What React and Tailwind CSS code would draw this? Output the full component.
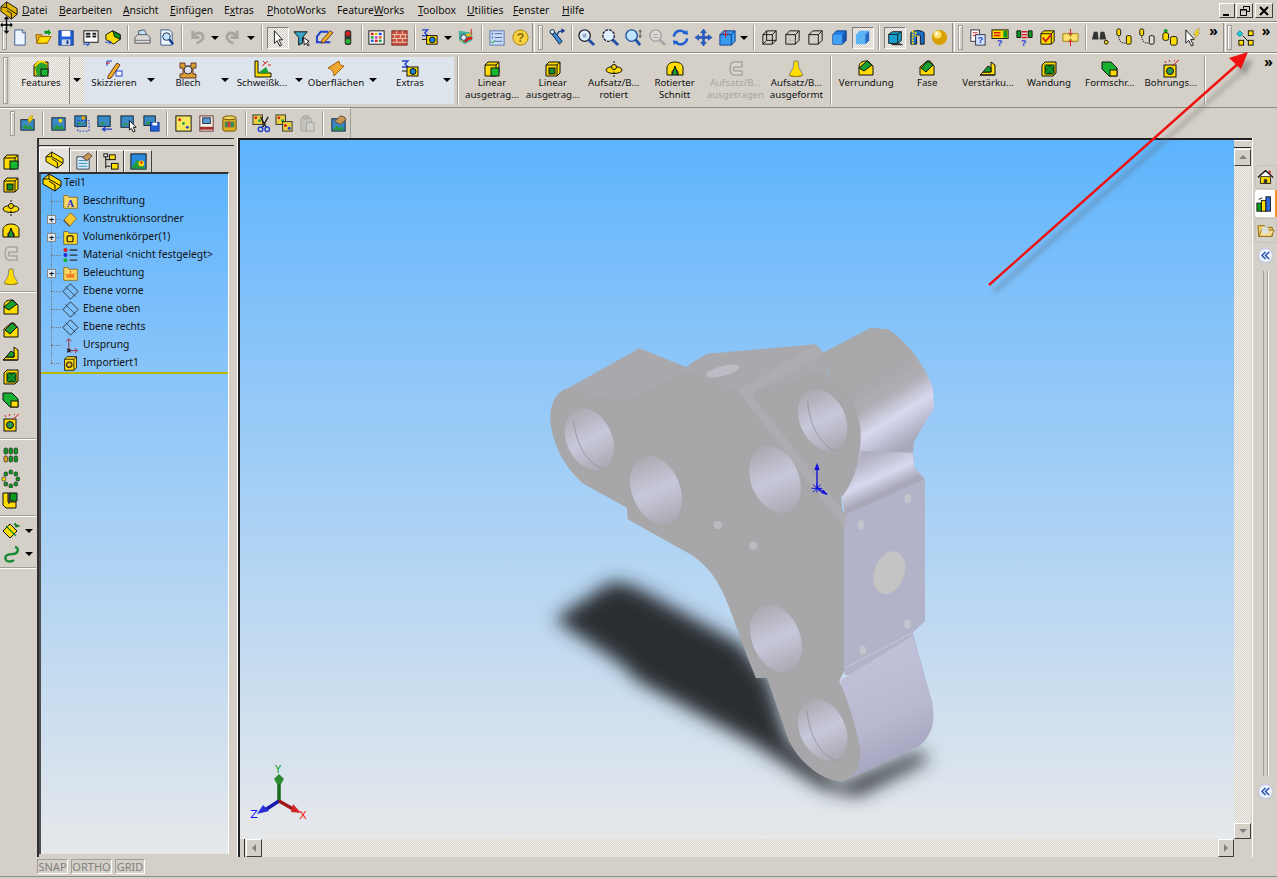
import React from "react";

const Y = "#ffdc00", G = "#0b9a1e", K = "#111", B = "#1f5fd8", R = "#d81c1c";
const S = { stroke: K, strokeWidth: 1 };
const Block = ({ f = Y }) => <path d="M3 6l3-3h11v11l-3 3H3z" fill={f} {...S} />;
const Inner = () => <path d="M3 6h11v11M14 6l3-3" fill="none" stroke={K} />;
const Dn = () => <span className="block w-0 h-0 border-x-[4px] border-t-[4px] border-x-transparent border-t-black" />;

const icons = {
  app: <g><path d="M1 6l6-5 11 7v6l-6 5L1 11z" fill="#e0b400" {...S} /><path d="M7 1v6l11 7M7 7L1 6" fill="none" stroke={K} /><path d="M7 10l5 3v6" fill="none" stroke={K} /></g>,
  new: <g><path d="M5 2h8l3 3v13H5z" fill="#eef5ff" stroke="#3b5f8f" /><path d="M13 2v3h3" fill="#c8dcf4" stroke="#3b5f8f" /></g>,
  open: <g><path d="M2 7h6l1 2h5v7H3z" fill="#e8a820" stroke="#9a6a00" /><path d="M3 16l3-7h12l-4 7z" fill={Y} stroke="#9a6a00" /><path d="M11 3l4 0 0-2 3 4-3 3 0-2h-4z" fill={G} /></g>,
  save: <g><rect x="2" y="3" width="15" height="15" fill="#1f5fd8" stroke="#123a8a" /><rect x="5" y="3" width="9" height="6" fill="#fff" /><rect x="5" y="12" width="9" height="6" fill="#cfd8e8" /><rect x="10" y="13" width="2" height="4" fill="#123a8a" /></g>,
  props: <g><rect x="3" y="3" width="15" height="12" fill="#fff" {...S} /><path d="M5 6h5M5 9h5M12 6h4M12 9h4" stroke="#222" strokeWidth="2" /><path d="M2 17h6M6 15l3 2-3 2" stroke="#1f4fd0" fill="none" /></g>,
  part: <g><path d="M2 7l7-4 8 4v5l-7 5-8-5z" fill={Y} {...S} /><path d="M9 3l8 4v5l-6-3-1-4z" fill={G} {...S} /><path d="M1 15h6M5 13l3 2-3 2" stroke="#1f4fd0" fill="none" /></g>,
  print: <g><path d="M6 3l6-1 3 6H6z" fill="#bfe0f8" stroke="#456" /><path d="M2 10l3-3h10l3 3v6H2z" fill="#d8d8d8" stroke="#555" /><path d="M2 13h16" stroke="#777" /></g>,
  preview: <g><path d="M4 2h9l3 3v13H4z" fill="#eef5ff" stroke="#3b5f8f" /><circle cx="10" cy="9" r="4" fill="#bfe4ff" stroke="#234" /><path d="M13 12l4 5" stroke="#123a8a" strokeWidth="2.5" /></g>,
  undo: <g><path d="M5 3v7h7M6 9c2-5 9-5 10 0 0 3-3 6-7 7" fill="none" stroke="#a8a6a0" strokeWidth="3" /></g>,
  redo: <g><path d="M15 3v7H8M14 9c-2-5-9-5-10 0 0 3 3 6 7 7" fill="none" stroke="#a8a6a0" strokeWidth="3" /></g>,
  select: <path d="M6 2v14l3-3 3 6 2-1-3-6h4z" fill="#fff" {...S} />,
  filter: <g><path d="M2 4h14l-5 6v6l-4 2v-8z" fill="#37a6c8" {...S} /><path d="M12 10l1 8 2-2 2 3 1-1-2-3 2-1z" fill="#fff" {...S} /></g>,
  sketch: <g><path d="M14 4H6L2 9v6h14" fill="none" stroke="#1f3fd0" strokeWidth="2" /><path d="M7 13l9-10 3 2-9 10-3 1z" fill="#f0b020" stroke="#633" /></g>,
  light: <g><rect x="7" y="2" width="7" height="16" rx="3" fill="#333" /><circle cx="10.5" cy="6" r="2.5" fill="#d81c1c" /><circle cx="10.5" cy="14" r="2.5" fill="#22c030" /></g>,
  grid: <g><rect x="2" y="3" width="16" height="14" fill="#fff" {...S} /><g>{[[R,"#e0c000","#2040e0"],["#20a040","#c040c0","#e06020"],["#2060e0",R,"#20a040"]].map((r,i)=>r.map((c,j)=><rect key={i+"-"+j} x={4+j*4.2} y={5+i*3.6} width="3" height="2.6" fill={c} />))}</g></g>,
  brick: <g><rect x="2" y="3" width="16" height="15" fill="#c8523e" stroke="#7a2a20" /><path d="M2 7h16M2 11h16M2 15h16M7 3v4M13 3v4M5 7v4M11 7v4M16 7v4M7 11v4M13 11v4" stroke="#f0c8b8" /></g>,
  tape: <g><path d="M2 2h6l-3 3 3 3H2" fill="none" stroke="#1f3fd0" strokeWidth="1.4" /><path d="M2 12h16" stroke={K} /><rect x="7" y="8" width="11" height="9" fill={Y} {...S} /><circle cx="13" cy="12.5" r="3" fill="#1f7fd0" {...S} /></g>,
  rainbow: <g><path d="M2 3l14 2v8l-8 4-6-4z" fill="#40b0a0" /><path d="M5 14c1-6 6-7 10-7" stroke="#e8c020" strokeWidth="3" fill="none" /><path d="M9 15c0-3 3-5 7-4" stroke={R} strokeWidth="3" fill="none" /><path d="M15 1v6" stroke={R} /><circle cx="7" cy="10" r="3" fill="#ddeeff" stroke="#234" /></g>,
  list: <g><rect x="3" y="3" width="15" height="15" fill="#c8dcf8" stroke="#5a7ab0" /><path d="M8 6h8M8 10h8M8 14h8" stroke="#4a6a9a" /><path d="M5 6h1M5 10h1" stroke="#2040a0" strokeWidth="2" /><path d="M4 14l2 2 2-3" stroke={G} fill="none" /></g>,
  help: <g><circle cx="10" cy="10" r="8" fill="#f8d040" stroke="#a88000" /><text x="10" y="15" textAnchor="middle" fontSize="13" fontWeight="700" fontFamily="Liberation Sans" fill="#8a6a10">?</text></g>,
  flash: <g><path d="M3 5l3-2 9 11-3 3z" fill="#3a8ad8" stroke="#123" /><circle cx="4.5" cy="4" r="2.4" fill="#cfe8ff" stroke="#123" /><path d="M10 7c0-3 2-4 6-4M14 1l3 2-3 2" stroke="#123a8a" fill="none" strokeWidth="1.4" /></g>,
  zoom: <g><circle cx="8" cy="8" r="6" fill="#dff0ff" stroke="#223" strokeWidth="1.4" /><path d="M12 12l6 6" stroke="#1f4fa0" strokeWidth="3" /><rect x="6" y="6" width="4" height="4" fill="#9ac" /></g>,
  zoomd: <g><circle cx="8" cy="8" r="6" fill="#dff0ff" stroke="#223" strokeWidth="1.4" strokeDasharray="3 1" /><path d="M12 12l6 6" stroke="#1f4fa0" strokeWidth="3" /></g>,
  zoomu: <g><circle cx="8" cy="8" r="6" fill="#bfe4ff" stroke="#1f4fa0" strokeWidth="1.4" /><path d="M12 12l5 6" stroke="#1f4fa0" strokeWidth="3" /><path d="M17 2v8M15.5 4L17 2l1.5 2M15.5 8l1.5 2 1.5-2" stroke="#555" fill="none" /></g>,
  zoomg: <g><circle cx="8" cy="8" r="6" fill="#dcdad4" stroke="#a0a0a0" strokeWidth="1.4" /><path d="M12 12l6 6" stroke="#a8a8a8" strokeWidth="3" /><path d="M5 7h6M5 10h6" stroke="#aaa" /></g>,
  rotate: <g><path d="M3 9a7 7 0 0 1 12-4" fill="none" stroke="#1f5fd0" strokeWidth="2.6" /><path d="M17 11a7 7 0 0 1-12 4" fill="none" stroke="#1f5fd0" strokeWidth="2.6" /><path d="M12 6l6 1-1-5zM8 14l-6-1 1 5z" fill="#1f5fd0" /></g>,
  pan: <path d="M10 1l3 4h-2v4h4V7l4 3-4 3v-2h-4v4h2l-3 4-3-4h2v-4H5v2l-4-3 4-3v2h4V5H7z" fill="#1f5fd0" stroke="#123a8a" strokeWidth=".5" />,
  views: <g><path d="M2 7l4-4h12v11l-4 4H2z" fill="#3a9cf0" stroke="#123a8a" /><path d="M2 7h12v11M14 7l4-4" fill="none" stroke="#123a8a" /><path d="M8 2v8M5 5l3 3 3-3" stroke={R} fill="none" /></g>,
  wire: <path d="M3 7l4-4h10v10l-4 4H3zM3 7h10v10M13 7l4-4M7 3v10h10M7 13l-4 4" fill="none" stroke={K} />,
  hid: <g><path d="M3 7l4-4h10v10l-4 4H3zM3 7h10v10M13 7l4-4" fill="none" stroke={K} /><path d="M7 3v10h10M7 13l-4 4" fill="none" stroke="#999" strokeDasharray="1 1" /></g>,
  sil: <path d="M3 7l4-4h10v10l-4 4H3zM3 7h10v10M13 7l4-4" fill="none" stroke={K} />,
  shade: <g><path d="M3 7l4-4h10v10l-4 4H3z" fill="#1f7fe8" stroke="#123a8a" /><path d="M3 7h10v10H3z" fill="#3fa0f4" /><path d="M13 7l4-4v10l-4 4z" fill="#1a55b0" /></g>,
  shadebig: <g><path d="M3 7l4-4h10v10l-4 4H3z" fill="#5ab4f4" /><path d="M13 7l4-4v10l-4 4z" fill="#2a6ac0" /></g>,
  shadow: <g><path d="M5 16l12 0 2 2H7z" fill="#333" /><path d="M3 6l4-3h10v10l-4 3H3z" fill="#1aa0d0" stroke={K} /><path d="M3 6h10v10M13 6l4-3" fill="none" stroke={K} /></g>,
  sect: <g><path d="M3 5c3-3 11-3 14 0v12h-4V8c-1-1-3-1-4 0v9H3z" fill="#1a70d0" stroke={K} /><path d="M5 3v14M8 4v5" stroke={Y} strokeDasharray="2 1" strokeWidth="2" /></g>,
  ball: <g><circle cx="10" cy="10" r="8" fill="#d8a000" /><circle cx="8" cy="7" r="4" fill="#ffe26a" /><circle cx="7" cy="6" r="1.5" fill="#fff" /></g>,
  refq: <g><rect x="3" y="2" width="9" height="12" fill="#fff" stroke="#334" /><path d="M5 5h5M5 8h5" stroke={R} /><rect x="8" y="7" width="10" height="11" fill="#cfe4ff" stroke="#334" /><text x="13" y="16" textAnchor="middle" fontSize="10" fontWeight="700" fontFamily="Liberation Sans" fill="#1f3fd0">?</text></g>,
  ybar: <g><rect x="1" y="2" width="17" height="9" fill={Y} {...S} /><path d="M3 5h7M3 8h7" stroke={R} strokeWidth="1.6" /><rect x="13" y="3" width="4" height="7" fill={G} /><text x="9" y="19" textAnchor="middle" fontSize="10" fontWeight="700" fontFamily="Liberation Sans" fill="#1f3fd0">?</text></g>,
  gbar: <g><path d="M2 3h4v7H2zM14 3h4v7h-4z" fill={G} {...S} /><path d="M7 4h6M7 7h6M7 10h6" stroke={R} strokeWidth="1.5" /><text x="9" y="19" textAnchor="middle" fontSize="10" fontWeight="700" fontFamily="Liberation Sans" fill="#1f3fd0">?</text></g>,
  check: <g><Block /><Inner /><path d="M5 10l3 4 6-7" stroke={R} strokeWidth="2" fill="none" /></g>,
  squeeze: <g><path d="M2 6h6l2 3 2-3h6v8h-6l-2-3-2 3H2z" fill="#ffe070" stroke="#a08000" /><path d="M10 1v6M8 5l2 2 2-2M10 19v-6M8 15l2-2 2 2" stroke={R} fill="none" /></g>,
  binoc: <g><path d="M3 4h4l1 8H1zM10 4h4l2 8H9z" fill="#333" /><circle cx="16" cy="15" r="2" fill={Y} stroke={K} /></g>,
  cyl1: <g><rect x="3" y="1" width="4" height="7" rx="1.5" fill={Y} {...S} /><path d="M5 9c0 5 3 7 7 7" stroke={K} fill="none" strokeDasharray="1.5 1" /><rect x="13" y="8" width="5" height="9" rx="1.5" fill={Y} {...S} /></g>,
  cyl2: <g><rect x="3" y="1" width="4" height="7" rx="1.5" fill={Y} {...S} /><path d="M5 9c0 5 3 7 7 7" stroke={K} fill="none" strokeDasharray="1.5 1" /><rect x="13" y="8" width="5" height="9" rx="1.5" fill="#ddd" {...S} /></g>,
  cyl3: <g><circle cx="6" cy="3" r="2" fill={G} /><rect x="3" y="5" width="6" height="8" rx="2" fill={Y} {...S} /><rect x="11" y="9" width="7" height="9" rx="2" fill={Y} {...S} /></g>,
  curbolt: <g><path d="M3 2v14l3-3 3 6 2-1-3-6h4z" fill="#fff" {...S} /><path d="M15 1l-4 6h3l-3 6 7-8h-3l3-4z" fill={Y} stroke="#888" strokeWidth=".5" /></g>,
  nodes: <g><path d="M4 3l-3 3 3 3 3-3z" fill="#18d8e8" stroke="#0a7a8a" /><rect x="13" y="3" width="5" height="5" fill={Y} {...S} /><rect x="3" y="13" width="5" height="5" fill={Y} {...S} /><rect x="13" y="13" width="5" height="5" fill={Y} {...S} /><path d="M7 8l6 6" stroke={K} /></g>,
  fe: <g><Block /><Inner /><rect x="9" y="9" width="8" height="8" fill="#18b830" stroke={K} /></g>,
  cut: <g><Block /><Inner /><rect x="6" y="9" width="6" height="6" fill="#1a8a2a" stroke={K} /></g>,
  revb: <g><ellipse cx="10" cy="11" rx="8" ry="3.5" fill={Y} {...S} /><path d="M10 2v16" stroke={K} strokeDasharray="2 1.5" /><circle cx="10" cy="8" r="2.5" fill={Y} stroke={K} /></g>,
  revc: <g><path d="M2 9c0-8 16-8 16 0v7h-5v-3c0-3-6-3-6 0v3H2z" fill={Y} {...S} /><path d="M7 16l3-9 3 9z" fill="#18a030" stroke={K} /></g>,
  sweep: <path d="M16 3H8C3 3 3 16 8 16h8v-4H9C7 12 7 8 9 8h7z" fill="#d8d6cf" stroke="#a8a6a0" strokeWidth="1.6" />,
  loft: <g><path d="M8 2h4l1 7 4 7c-3 2-11 2-14 0l4-7z" fill={Y} stroke="#888" /><path d="M3 16c3 2 11 2 14 0" stroke="#a08000" fill="none" /></g>,
  fillet: <g><path d="M3 8c0-4 3-6 7-6h2l5 5v9H3z" fill={Y} {...S} /><path d="M3 9l8-7 5 4-8 6z" fill="#18a030" stroke={K} /></g>,
  chamfer: <g><path d="M3 8l7-6h3l4 5v9H3z" fill={Y} {...S} /><path d="M4 9l7-7 5 4-7 7z" fill="#18a030" stroke={K} /></g>,
  rib: <g><path d="M2 16l3-3h8V3l4 3v10z" fill={Y} {...S} /><path d="M5 13l5-6 3 2v4z" fill="#18a030" stroke={K} /><path d="M2 16h15" stroke={K} /></g>,
  shell: <g><Block /><rect x="6" y="6" width="9" height="9" fill="#0a7a20" stroke={K} /><path d="M6 6l9 9M15 6l-9 9" stroke="#18b030" /></g>,
  dome: <g><path d="M2 3h9l6 6v8H9l-7-7z" fill="#18b030" stroke={K} /><rect x="10" y="11" width="7" height="6" fill={Y} {...S} /></g>,
  hole: <g><rect x="3" y="6" width="12" height="12" fill={Y} {...S} /><circle cx="9" cy="12" r="3.5" fill="#2a9a4a" stroke={K} /><path d="M11 7l7-6M4 2l1 2M8 1l1 2M13 1l1 1" stroke={R} /></g>,
  feat: <g><Block f="#e8c400" /><path d="M4 8l6-5 6 3-1 8-3 3H6z" fill="#1aa030" opacity=".95" /><rect x="10" y="10" width="7" height="7" fill="#18b830" stroke={K} /><path d="M4 7c2-4 6-5 10-4" stroke={Y} strokeWidth="2" fill="none" /></g>,
  skz: <g><path d="M3 7V2h5" fill="none" stroke="#1f3fd0" /><path d="M4 17l9-13 3 2-9 13-3 1z" fill="#f0b020" stroke="#633" /><rect x="12" y="12" width="6" height="5" fill="#fff" stroke="#1f3fd0" /><path d="M2 4h4" stroke={R} /></g>,
  blech: <g><path d="M2 4h5v3h6V4h5v5h-3v6h3v4H2v-4h3V9H2z" fill="#d8a030" stroke="#633" /><circle cx="10" cy="11" r="4" fill="#dde" stroke="#333" /></g>,
  weld: <g><path d="M3 2h3v12h13v4H3z" fill={Y} {...S} /><path d="M6 14l8-6 3 6z" fill="#18a030" /><path d="M10 7l6-5M11 2l3 3M16 6l3 0" stroke={R} /></g>,
  surf: <path d="M2 9l11-7c0 3 2 5 5 5L8 17c0-4-2-7-6-8z" fill="#f0a830" stroke="#a06000" />,
  ext: <g><path d="M2 2h6l-3 3 3 3H2" fill="none" stroke="#1f3fd0" strokeWidth="1.4" /><path d="M2 12h5" stroke={K} /><rect x="7" y="8" width="11" height="9" fill={Y} {...S} /><circle cx="13" cy="12.5" r="3" fill="#1f7fd0" {...S} /></g>,
  bolt: <g><rect x="3" y="6" width="14" height="11" fill="#3a8ac8" stroke="#123" /><path d="M4 15l4-4 3 3 2-2 3 4z" fill="#2a9a3a" /><path d="M13 2l-3 5h2l-2 4 6-6h-2l2-3z" fill={Y} stroke="#a08000" strokeWidth=".5" /></g>,
  scene: <g><rect x="3" y="4" width="14" height="13" fill="#3a8ac8" stroke="#123" /><path d="M4 16l4-5 3 3 2-2 3 4z" fill="#2a9a3a" /><circle cx="12" cy="7" r="2" fill={Y} /></g>,
  scened: <g><rect x="3" y="2" width="12" height="11" fill="#3a8ac8" stroke="#123" /><path d="M4 12l4-4 3 3 3-2z" fill="#2a9a3a" /><rect x="6" y="7" width="12" height="11" fill="none" stroke="#1f3fd0" strokeDasharray="2 1.5" /><circle cx="12" cy="4" r="2" fill="#f0a000" /></g>,
  scenea: <g><rect x="3" y="2" width="13" height="11" fill="#3a8ac8" stroke="#123" /><path d="M4 12l4-4 3 3 3-2z" fill="#2a9a3a" /><path d="M8 16h10M11 14l-3 2 3 2" stroke="#1f3fd0" fill="none" strokeWidth="1.4" /></g>,
  scenec: <g><rect x="2" y="2" width="13" height="12" fill="#3a8ac8" stroke="#123" /><path d="M3 13l4-4 3 3 3-2z" fill="#2a9a3a" /><path d="M11 7v10l2-2 2 4 2-1-2-4h3z" fill="#fff" {...S} /></g>,
  scenes: <g><rect x="2" y="2" width="12" height="10" fill="#3a8ac8" stroke="#123" /><path d="M3 11l4-4 3 3z" fill="#2a9a3a" /><rect x="9" y="9" width="9" height="9" fill="#1f5fd8" stroke="#123a8a" /><rect x="11" y="9" width="5" height="3" fill="#fff" /></g>,
  dots: <g><rect x="2" y="2" width="16" height="16" fill="#f8e860" {...S} /><circle cx="6" cy="6" r="1.5" fill={R} /><circle cx="10" cy="10" r="1.5" fill="#1f9f3f" /><circle cx="14" cy="14" r="1.5" fill="#1f3fd0" /></g>,
  book: <g><rect x="3" y="2" width="14" height="16" fill="#f4efe0" stroke="#633" /><rect x="6" y="4" width="8" height="6" fill="#5a9ad8" stroke="#234" /><path d="M3 15h14" stroke="#a03030" strokeWidth="3" /></g>,
  can: <g><rect x="3" y="4" width="14" height="14" rx="2" fill="#e0b020" stroke="#6a5000" /><ellipse cx="10" cy="4" rx="7" ry="2" fill="#f4d860" stroke="#6a5000" /><rect x="5" y="8" width="10" height="6" fill="#3a8a58" /><rect x="8" y="8" width="3" height="6" fill="#d84040" /></g>,
  scissors: <g><rect x="1" y="1" width="10" height="10" fill="#e8d040" stroke="#333" /><circle cx="4" cy="4" r="1.5" fill={R} /><circle cx="8" cy="7" r="1.5" fill="#1f9f3f" /><path d="M9 3l6 11M17 3l-6 11" stroke="#222" strokeWidth="1.5" /><circle cx="9" cy="16" r="2.4" fill="none" stroke="#1f3fd0" strokeWidth="1.5" /><circle cx="16" cy="16" r="2.4" fill="none" stroke="#1f3fd0" strokeWidth="1.5" /></g>,
  copy: <g><rect x="1" y="1" width="10" height="10" fill="#e8d040" stroke="#333" /><circle cx="4" cy="4" r="1.5" fill={R} /><circle cx="8" cy="7" r="1.5" fill="#1f9f3f" /><rect x="8" y="8" width="10" height="10" fill="#e8d040" stroke="#333" /><circle cx="11" cy="12" r="1.6" fill={R} /><circle cx="15" cy="15" r="1.6" fill="#1f3fd0" /></g>,
  paste: <g><rect x="3" y="4" width="11" height="14" rx="1" fill="#c4c2bc" stroke="#a8a6a0" /><rect x="9" y="9" width="8" height="9" fill="#d0cec8" stroke="#a8a6a0" /><rect x="6" y="2" width="5" height="3" fill="#bbb" stroke="#a8a6a0" /></g>,
  hand: <g><rect x="3" y="5" width="14" height="13" fill="#3a8ac8" stroke="#123" /><path d="M4 17l4-5 3 3 2-2 3 4z" fill="#2a9a3a" /><path d="M6 8l6-6 4 1 2 3-6 5z" fill="#c89850" stroke="#644" /></g>,
  pattern: <g>{[3,8,13].map(x=>[3,11].map(y=><rect key={x+"-"+y} x={x} y={y} width="3.6" height="6" rx="1.5" fill={y===11&&x===3?"#e8a020":G} stroke="#222" strokeWidth=".7" />))}</g>,
  circ: <g>{[[8,2],[13,4],[15,9],[13,14],[8,16],[3,14],[1,9],[3,4]].map(([x,y],i)=><rect key={i} x={x} y={y} width="3.6" height="4" rx="1.5" fill={i===6?Y:G} stroke="#222" strokeWidth=".7" />)}</g>,
  mirror: <g><path d="M2 2h5v9h8v6H5l-3-3z" fill={Y} {...S} /><path d="M9 2h7v8H9z" fill={G} stroke={K} /><path d="M8 1v12" stroke={K} /></g>,
  plane: <g><path d="M2 10l7-7 7 7-7 7z" fill={Y} {...S} /><path d="M5 5l10 10M14 2l1 4 3-1-2-1M13 3l4 3" stroke="#1a8a2a" strokeWidth="1.3" /></g>,
  curve: <path d="M14 3c5 1 3 7-2 7-6 0-9 2-7 6 1 2 6 2 8 0" fill="none" stroke="#1a8a3a" strokeWidth="2.4" />,
  home: <g><path d="M1 10l9-8 9 8" fill="#fff" stroke={K} strokeWidth="1.5" /><path d="M4 9h12v8H4z" fill={Y} {...S} /><rect x="8" y="12" width="4" height="5" fill="#333" /><path d="M13 2h3v5z" fill={R} /></g>,
  books: <g><rect x="1" y="9" width="5" height="9" fill={G} {...S} /><rect x="6" y="6" width="5" height="12" fill={Y} {...S} /><rect x="11" y="2" width="5" height="16" fill="#2a6ae0" {...S} /><path d="M3 5l4-2" stroke={K} /></g>,
  folder: <g><path d="M1 4h7l1 2h8v10H2z" fill="#e8c860" stroke="#8a6a10" /><path d="M2 16l3-7h14l-3 7z" fill="#f4dc90" stroke="#8a6a10" /><circle cx="9" cy="9" r="4" fill="#d8e8f8" opacity=".8" /></g>,
  tTree: <g><path d="M1 6l6-5 12 7v5l-6 5L1 11z" fill={Y} {...S} /><path d="M7 1v5l12 7M7 6L1 6M7 8l6 4v6" fill="none" stroke={K} /></g>,
  tProp: <g><path d="M3 5h13v13H3z" fill="#d8ecfc" stroke="#345" /><path d="M5 9h9M5 12h9M5 15h9" stroke="#38a" /><path d="M9 6l6-5 4 3-5 5z" fill="#c89850" stroke="#644" /></g>,
  tCfg: <g><path d="M5 3v14M5 8h5M5 15h5" stroke={K} /><rect x="9" y="3" width="6" height="5" fill={Y} {...S} /><rect x="11" y="12" width="7" height="6" fill={Y} {...S} /><rect x="3" y="2" width="4" height="3" fill="#eee" stroke={K} /></g>,
  tDisp: <g><rect x="2" y="2" width="16" height="16" fill="#2a8ae0" {...S} /><path d="M2 17l7-9 9 10z" fill="#1f9a3a" /><circle cx="13" cy="12" r="3" fill={Y} /><circle cx="13" cy="11" r="1.3" fill={R} /></g>,
  fA: <g><path d="M2 3h5l1 2h10v13H2z" fill="#f8d860" stroke="#8a6a10" /><text x="10" y="16" textAnchor="middle" fontSize="12" fontWeight="700" fontFamily="Liberation Serif" fill="#1f2fd0">A</text></g>,
  fK: <g><path d="M2 11l8-9 7 7-8 9z" fill="#f8c830" stroke="#8a6a10" /><path d="M2 11l7 7" stroke="#555" strokeWidth="1.6" /></g>,
  fV: <g><path d="M2 3h5l1 2h10v13H2z" fill="#ffdc20" stroke="#555" /><rect x="6" y="8" width="7" height="7" rx="1.5" fill="none" stroke={K} strokeWidth="1.4" /></g>,
  fM: <g><circle cx="4" cy="3.5" r="2.4" fill={R} /><circle cx="4" cy="9.5" r="2.4" fill="#1f2fd0" /><circle cx="4" cy="15.5" r="2.4" fill="#18b030" /><path d="M9 3.5h9M9 9.5h9M9 15.5h9" stroke="#333" strokeWidth="1.6" /></g>,
  fL: <g><path d="M2 3h5l1 2h10v13H2z" fill="#f8d860" stroke="#8a6a10" /><path d="M5 15a5 5 0 0 1 10 0z" fill="#f08020" /><path d="M4 11l2 1M10 7v2M15 10l-2 2" stroke={R} /></g>,
  pl: <g><path d="M10 1l9 9-9 9-9-9z" fill="none" stroke="#222" /><path d="M4 4l12 12" stroke="#222" strokeWidth=".8" /></g>,
  ur: <g><path d="M8 16V3M5 5l3-3 3 3" stroke="#b01010" fill="none" /><path d="M8 16h10M15 13l3 3-3 3" stroke="#b01010" fill="none" /><path d="M6 14l4 4M10 14l-4 4" stroke={K} strokeWidth="1.4" /></g>,
  imp: <g><path d="M3 5l3-3h11v13l-3 3H3z" fill="#ffdc20" {...S} /><path d="M3 5h11v13M14 5l3-3" fill="none" stroke={K} /><circle cx="8.5" cy="11.5" r="3.5" fill="#a08020" stroke={K} /><circle cx="8.5" cy="11.5" r="1.5" fill="#ffdc20" /></g>,
};

const Ic = ({ k, s = 18, className = "" }) => (
  <svg viewBox="0 0 20 20" width={s} height={s} className={"block shrink-0 " + className}>{icons[k]}</svg>
);
const Dflt = "w-[23.4px]";
const B1 = ({ k, w = "w-[23.4px]" }) => <div className={w + " flex justify-center items-center shrink-0"}><Ic k={k} s={19} /></div>;
const Arrow = ({ w }) => <div className={w + " flex justify-center items-center shrink-0"}><Dn /></div>;
const Sep = ({ w }) => <div className={w + " flex justify-center shrink-0 self-stretch py-[2px]"}><div className="w-[2px] border-l border-l-[#a09e98] border-r border-r-white" /></div>;
const Grip = ({ w, className = "" }) => <div className={w + " flex justify-center shrink-0 self-stretch py-[2px] " + className}><div className="w-[5px] border border-[#a09e98] bg-[#d4d0c8] shadow-[inset_1px_1px_0_#fff]" /></div>;
const Groove = ({ w }) => <div className={w + " shrink-0 self-stretch border-l border-l-[#908e88] border-r border-r-white"} />;
const Chev = ({ w, className = "" }) => <div className={w + " flex justify-center shrink-0 font-bold text-[14px] leading-none tracking-[-1px] text-black " + className}>»</div>;

const Menu = ({ pre = "", u, post, w }) => (
  <span className={w + " shrink-0"}>{pre}<span className="underline">{u}</span>{post}</span>
);

const Tab = ({ k, label, active }) => (
  <div className={"w-[74px] h-full flex shrink-0 " + (active ? "bg-[image:repeating-conic-gradient(#f6f5f2_0_25%,#d4d0c8_0_50%)] bg-[length:2px_2px]" : "")}>
    <div className={"w-[60px] flex flex-col items-center pt-[2px] " + (active ? "border-r border-r-[#8a8880] pl-[3px]" : "")}>
      <Ic k={k} s={20} />
      <span className="leading-[12px] text-[9.7px] whitespace-nowrap -mt-[2px]">{label}</span>
    </div>
    <div className="w-[14px] flex justify-center pt-[21px]"><Dn /></div>
  </div>
);
const Cmd = ({ k, l1, l2, dis }) => (
  <div className={"w-[60.9px] shrink-0 flex flex-col items-center pt-[5px] text-[9.7px] " + (dis ? "text-[#a8a69f]" : "")}>
    <Ic k={k} s={20} />
    <span className="leading-[12px] whitespace-nowrap -mt-[2px]">{l1}</span>
    {l2 && <span className="leading-[12px] whitespace-nowrap">{l2}</span>}
  </div>
);
const L = ({ k, dn }) => <div className="h-[23px] w-full flex items-center pl-[1px] relative"><Ic k={k} s={20} />{dn && <span className="ml-[4px]"><Dn /></span>}</div>;
const LSep = ({ h }) => <div className={h + " flex items-center w-[36px] shrink-0"}><div className="w-full border-t border-t-[#a09e98] border-b border-b-white" /></div>;

const tree = [
  ["fA", "Beschriftung"], ["fK", "Konstruktionsordner", 1], ["fV", "Volumenkörper(1)", 1],
  ["fM", "Material <nicht festgelegt>"], ["fL", "Beleuchtung", 1], ["pl", "Ebene vorne"],
  ["pl", "Ebene oben"], ["pl", "Ebene rechts"], ["ur", "Ursprung"], ["imp", "Importiert1"],
];

const dither = "bg-[image:repeating-conic-gradient(#f4f3f0_0_25%,#d4d0c8_0_50%)] bg-[length:2px_2px]";
const SBtn = ({ dir, className = "" }) => {
  const tri = { up: "M1 6l4-4 4 4z", down: "M1 3l4 4 4-4z", left: "M7 1L3 5l4 4z", right: "M3 1l4 4-4 4z" }[dir];
  return (
    <div className={"bg-[#d4d0c8] border border-t-white border-l-white border-r-[#404040] border-b-[#404040] flex items-center justify-center shrink-0 " + className}>
      <svg viewBox="0 0 10 10" width="10" height="10"><path d={tri} fill="#808080" /></svg>
    </div>
  );
};

const Model = () => (
  <svg viewBox="239 139 995 699" width="995" height="699" className="absolute left-0 top-0">
    <defs>
      <filter id="bl" x="-20%" y="-20%" width="140%" height="140%"><feGaussianBlur stdDeviation="27" /></filter>
      <linearGradient id="lug" gradientUnits="userSpaceOnUse" x1="1060" y1="200" x2="1175" y2="388">
        <stop offset="0" stopColor="#a8a8ab" /><stop offset=".3" stopColor="#aeaeb4" /><stop offset=".6" stopColor="#d8d8f0" /><stop offset="1" stopColor="#a9a9bc" />
      </linearGradient>
      <linearGradient id="fil" gradientUnits="userSpaceOnUse" x1="1050" y1="430" x2="1100" y2="540">
        <stop offset="0" stopColor="#b0b0c0" /><stop offset=".6" stopColor="#d8d8f0" /><stop offset="1" stopColor="#a8a8b8" />
      </linearGradient>
      <linearGradient id="low" gradientUnits="userSpaceOnUse" x1="1050" y1="1060" x2="1160" y2="1320">
        <stop offset="0" stopColor="#c0c0d8" /><stop offset=".6" stopColor="#b8b8d0" /><stop offset="1" stopColor="#a8a8c2" />
      </linearGradient>
      <linearGradient id="hole" x1="0" y1="0" x2="0" y2="1">
        <stop offset="0" stopColor="#aaaab0" /><stop offset=".5" stopColor="#c8c8dc" /><stop offset="1" stopColor="#aaaab2" />
      </linearGradient>
    </defs>
    <g transform="translate(520 310) scale(.33333)">
      <path d="M100 925L275 810L340 825L660 1000L745 1110L800 1285L960 1420L1195 1320L1225 1345L1010 1455L900 1430L700 1300L350 1110L300 1060Z" fill="#2a2e31" filter="url(#bl)" />
      <path d="M130 238L355 112L495 168L520 150L560 128L885 100L910 130L970 500L320 400Z" fill="#a9a9ad" />
      <path d="M905 125L1050 50L1100 55C1160 90 1215 170 1235 230L1240 290L1180 390L1175 435L1020 520L950 300Z" fill="url(#lug)" />
      <path d="M1175 425L1180 470L1212 505V930L1175 965L1235 1180L970 1090V560Z" fill="#b2b2c8" />
      <path d="M1020 420L1175 425L1180 470L1210 505L975 610L958 550C985 530 1010 480 1020 420Z" fill="url(#fil)" />
      <path d="M958 1108L1175 975L1232 1170C1245 1230 1235 1270 1195 1305L965 1412L1010 1300Z" fill="url(#low)" />
      <path d="M970 1072L1175 965" stroke="#c8c8dc" strokeWidth="3" />
      <path d="M130 235C100 250 85 290 88 330C95 400 130 470 190 520L318 590L320 625L500 725C560 760 595 810 625 890L680 1040L705 1102L738 1100L800 1280C830 1350 900 1410 965 1412C1010 1395 1025 1350 1015 1300C1005 1240 970 1140 955 1110L970 1080V650L960 560C990 530 1025 450 1018 350C1010 280 960 200 880 180L800 220L650 240L500 180L320 270Z" fill="#a7a7aa" />
      <path d="M650 240L885 100L910 128L690 250L975 610L970 650Z" fill="#adadb1" />
      <ellipse cx="605" cy="180" rx="52" ry="15" transform="rotate(-15 605 180)" fill="#bcbcc4" />
      <ellipse cx="205" cy="385" rx="68" ry="97" transform="rotate(-25 205 385)" fill="url(#hole)" />
      <path d="M158 330C165 400 200 460 250 475" fill="none" stroke="#8a8a90" strokeWidth="2" />
      <ellipse cx="405" cy="537" rx="72" ry="107" transform="rotate(-22 405 537)" fill="url(#hole)" />
      <ellipse cx="762" cy="505" rx="72" ry="105" transform="rotate(-22 762 505)" fill="url(#hole)" />
      <ellipse cx="905" cy="327" rx="68" ry="97" transform="rotate(-25 905 327)" fill="url(#hole)" />
      <path d="M860 270C865 340 895 400 945 420" fill="none" stroke="#8a8a90" strokeWidth="2" />
      <ellipse cx="765" cy="982" rx="72" ry="105" transform="rotate(-22 765 982)" fill="url(#hole)" />
      <ellipse cx="905" cy="1257" rx="68" ry="97" transform="rotate(-25 905 1257)" fill="url(#hole)" />
      <path d="M858 1200C865 1270 895 1330 945 1350" fill="none" stroke="#8a8a90" strokeWidth="2" />
      <ellipse cx="1105" cy="785" rx="45" ry="66" transform="rotate(20 1105 785)" fill="#c4c4c4" />
      <circle cx="590" cy="642" r="12" fill="#bcbcc0" /><circle cx="697" cy="704" r="12" fill="#bcbcc0" />
      {[[1020,642],[1160,562],[1160,940],[1025,1018]].map(([x,y]) => <ellipse key={x+y} cx={x} cy={y} rx="10" ry="14" fill="#c4c4cc" />)}
      <path d="M888 530V462" stroke="#1010e0" strokeWidth="4" /><path d="M888 455l-8 22h16z" fill="#1010e0" />
      <path d="M876 520l24 24M900 520l-24 24M888 515v30M872 532h32" stroke="#1010e0" strokeWidth="3" />
      <path d="M888 530l30 20" stroke="#1010e0" strokeWidth="4" /><path d="M920 552l-20-6 8-10z" fill="#1010e0" />
    </g>
    <g>
      <path d="M278 800V778" stroke="#176a1d" strokeWidth="3.5" /><path d="M278 773l-5 5 3 5h4l3-5z" fill="#2a8a30" />
      <path d="M278 800l-14 9" stroke="#1a1ab0" strokeWidth="3.5" /><path d="M256 813l6-9 6 6z" fill="#2a30d8" />
      <path d="M278 800l14 8" stroke="#a01818" strokeWidth="3.5" /><path d="M300 812l-10-1 2-8z" fill="#d02828" />
      <text x="277" y="772" textAnchor="middle" fontSize="10" fontFamily="DejaVu Sans" fill="#0a9a2a">Y</text>
      <text x="253" y="817" textAnchor="middle" fontSize="11" fontFamily="DejaVu Sans" fill="#1414ff">Z</text>
      <text x="302" y="818" textAnchor="middle" fontSize="11" fontFamily="DejaVu Sans" fill="#ff1414">X</text>
    </g>
  </svg>
);

const winBtn = "h-[15px] bg-[#d4d0c8] border border-t-white border-l-white border-r-[#404040] border-b-[#404040] flex items-center justify-center";

export default function App() {
  return (
    <div className="w-[1277px] h-[879px] relative overflow-hidden bg-[#d4d0c8] flex flex-col text-[#111] text-[10.3px] font-['Noto_Sans','DejaVu_Sans',sans-serif]">
      {/* menu */}
      <div className="h-[22px] shrink-0 flex items-center border-b border-b-[#8c8a84] relative">
        <div className="w-[22px] shrink-0"><Ic k="app" s={19} /></div>
        <Menu u="D" post="atei" w="w-[37px]" />
        <Menu u="B" post="earbeiten" w="w-[64px]" />
        <Menu u="A" post="nsicht" w="w-[47px]" />
        <Menu u="E" post="infügen" w="w-[54px]" />
        <Menu pre="E" u="x" post="tras" w="w-[43px]" />
        <Menu u="P" post="hotoWorks" w="w-[70px]" />
        <Menu pre="Feature" u="W" post="orks" w="w-[81px]" />
        <Menu u="T" post="oolbox" w="w-[49px]" />
        <Menu u="U" post="tilities" w="w-[46px]" />
        <Menu u="F" post="enster" w="w-[49px]" />
        <Menu u="H" post="ilfe" w="w-[40px]" />
        <div className="ml-auto mr-[4px] flex gap-[1px] items-center">
          <div className={winBtn + " w-[16px]"}><svg viewBox="0 0 12 12" width="12" height="12"><path d="M2 10h6" stroke="#000" strokeWidth="2" /></svg></div>
          <div className={winBtn + " w-[17px]"}><svg viewBox="0 0 12 12" width="12" height="12"><path d="M4.5 3.5V1.5h6v5H8M1.5 4.5h6v6h-6zM1.5 5h6" fill="none" stroke="#000" /></svg></div>
          <div className={winBtn + " w-[18px] ml-[1px]"}><svg viewBox="0 0 12 12" width="12" height="12"><path d="M2 2l8 8M10 2l-8 8" stroke="#000" strokeWidth="2" /></svg></div>
        </div>
        <div className="absolute left-0 top-[15px]">
          <svg viewBox="0 0 14 20" width="13" height="20"><path d="M7 0L3.5 4H6v5H3V6.5L0 10l3 3.5V11h3v5H3.5L7 20l3.5-4H8v-5h3v2.5l3-3.5-3-3.5V9H8V4h2.5z" fill="#000" stroke="#fff" strokeWidth=".4" /></svg>
        </div>
      </div>

      {/* toolbar 1 */}
      <div className="h-[31px] shrink-0 flex items-stretch border-t border-t-white border-b border-b-[#8c8a84]">
        <Grip w="w-[8.3px]" />
        <B1 k="new" /><B1 k="open" /><B1 k="save" /><B1 k="props" /><B1 k="part" />
        <Sep w="w-[6px]" /><B1 k="print" /><B1 k="preview" /><Sep w="w-[8px]" />
        <B1 k="undo" /><Arrow w="w-[12px]" /><B1 k="redo" w="w-[23px]" /><Arrow w="w-[13px]" />
        <Sep w="w-[8.5px]" />
        <div className={Dflt + " shrink-0 flex items-center justify-center"}><div className={"w-[22px] h-[22px] flex items-center justify-center border border-t-[#808080] border-l-[#808080] border-r-white border-b-white " + dither}><Ic k="select" s={18} /></div></div>
        <B1 k="filter" /><B1 k="sketch" /><B1 k="light" /><Sep w="w-[5px]" /><B1 k="grid" /><B1 k="brick" />
        <Sep w="w-[7px]" /><B1 k="tape" /><Arrow w="w-[13px]" /><B1 k="rainbow" /><Sep w="w-[7px]" /><B1 k="list" /><B1 k="help" />
        <Groove w="w-[3px]" /><Grip w="w-[11px]" /><B1 k="flash" /><Sep w="w-[6px]" />
        <B1 k="zoom" /><B1 k="zoomd" /><B1 k="zoomu" /><B1 k="zoomg" /><B1 k="rotate" /><B1 k="pan" /><B1 k="views" />
        <Arrow w="w-[11px]" /><Sep w="w-[8px]" />
        <B1 k="wire" w="w-[23.2px]" /><B1 k="hid" w="w-[23.2px]" /><B1 k="sil" w="w-[23.2px]" /><B1 k="shade" w="w-[23.2px]" />
        <div className="w-[24px] shrink-0 flex items-center justify-center"><div className={"w-[22px] h-[22px] flex items-center justify-center border border-t-[#808080] border-l-[#808080] border-r-white border-b-white " + dither}><Ic k="shadebig" s={19} /></div></div>
        <Sep w="w-[8px]" />
        <div className="w-[24px] shrink-0 flex items-center justify-center"><div className={"w-[22px] h-[22px] flex items-center justify-center border border-t-[#808080] border-l-[#808080] border-r-white border-b-white " + dither}><Ic k="shadow" s={18} /></div></div>
        <B1 k="sect" w="w-[21px]" /><B1 k="ball" w="w-[24px]" />
        <Groove w="w-[3px]" /><Grip w="w-[11px]" />
        <B1 k="refq" /><B1 k="ybar" /><B1 k="gbar" /><B1 k="check" /><B1 k="squeeze" /><Sep w="w-[6px]" />
        <B1 k="binoc" w="w-[23px]" /><B1 k="cyl1" w="w-[23px]" /><B1 k="cyl2" w="w-[23px]" /><B1 k="cyl3" w="w-[23px]" /><B1 k="curbolt" w="w-[23px]" />
        <Chev w="w-[19px]" className="pt-[1px]" /><Groove w="w-[3px]" /><Grip w="w-[8px]" />
        <B1 k="nodes" w="w-[24px]" /><Chev w="w-[16px]" className="pt-[1px]" />
      </div>

      {/* toolbar 2 */}
      <div className="h-[55px] shrink-0 flex items-stretch border-t border-t-white border-b border-b-[#8c8a84]">
        <Grip w="w-[10px]" className="!py-[3px]" />
        <div className="flex my-[3px] bg-[#dde4ec]">
          <Tab k="feat" label="Features" active />
          <Tab k="skz" label="Skizzieren" />
          <Tab k="blech" label="Blech" />
          <Tab k="weld" label="Schweißk..." />
          <Tab k="surf" label="Oberflächen" />
          <Tab k="ext" label="Extras" />
        </div>
        <Sep w="w-[7.5px]" />
        <Cmd k="fe" l1="Linear" l2="ausgetrag..." />
        <Cmd k="cut" l1="Linear" l2="ausgetrag..." />
        <Cmd k="revb" l1="Aufsatz/B..." l2="rotiert" />
        <Cmd k="revc" l1="Rotierter" l2="Schnitt" />
        <Cmd k="sweep" l1="Aufsatz/B..." l2="ausgetragen" dis />
        <Cmd k="loft" l1="Aufsatz/B..." l2="ausgeformt" />
        <Sep w="w-[9px]" />
        <Cmd k="fillet" l1="Verrundung" />
        <Cmd k="chamfer" l1="Fase" />
        <Cmd k="rib" l1="Verstärku..." />
        <Cmd k="shell" l1="Wandung" />
        <Cmd k="dome" l1="Formschr..." />
        <Cmd k="hole" l1="Bohrungs..." />
        <Sep w="w-[8px]" />
        <div className="flex-1 flex justify-end pr-[1px]"><Chev w="w-[16px]" className="pt-[1px]" /></div>
      </div>

      {/* toolbar 3 */}
      <div className="h-[30px] shrink-0 w-[351px] flex items-stretch border-t border-t-white border-r border-r-[#a09e98] pl-[8px]">
        <Grip w="w-[8px]" />
        <B1 k="bolt" />
        <Sep w="w-[7px]" />
        <B1 k="scene" /><B1 k="scened" /><B1 k="scenea" /><B1 k="scenec" /><B1 k="scenes" />
        <Sep w="w-[8px]" />
        <B1 k="dots" /><B1 k="book" /><B1 k="can" />
        <Sep w="w-[8px]" />
        <B1 k="scissors" /><B1 k="copy" /><B1 k="paste" />
        <Sep w="w-[7px]" />
        <B1 k="hand" />
      </div>

      {/* main */}
      <div className="h-[719px] shrink-0 flex">
        <div className="w-[37px] shrink-0 flex flex-col pt-[12px]">
          <L k="fe" /><L k="cut" /><L k="revb" /><L k="revc" /><L k="sweep" /><L k="loft" />
          <LSep h="h-[8px]" />
          <L k="fillet" /><L k="chamfer" /><L k="rib" /><L k="shell" /><L k="dome" /><L k="hole" />
          <LSep h="h-[9px]" />
          <L k="pattern" /><L k="circ" /><L k="mirror" />
          <LSep h="h-[7px]" />
          <L k="plane" dn /><L k="curve" dn />
          <LSep h="h-[5px]" />
        </div>

        <div className="w-[197px] shrink-0 border-t border-t-[#303030] border-l-2 border-l-[#303030] flex flex-col pr-[2px]">
          <div className="h-[7px] shrink-0 border-b border-b-[#303030] -mr-[2px]" />
          <div className="h-[26px] shrink-0 flex items-end">
            {[["tTree", "w-[31px] h-[25px] bg-[#e4e2dc]"], ["tProp", "w-[27px] h-[22px]"], ["tCfg", "w-[27px] h-[22px]"], ["tDisp", "w-[28px] h-[22px]"]].map(([k, c]) => (
              <div key={k} className={c + " flex items-center justify-center border-t border-t-white border-l border-l-white border-r border-r-[#404040]"}><Ic k={k} s={19} /></div>
            ))}
          </div>
          <div className="h-[682px] w-[190px] shrink-0 mb-[2px] border-t-2 border-t-[#303030] border-l-2 border-l-[#505050] border-r border-r-white bg-gradient-to-b from-[#5db4fd] to-[#e6e8ea] flex flex-col">
            <div className="border-b-2 border-b-[#b8b800] relative">
              <div className="absolute left-[10px] top-[15px] h-[174px] w-[9px] border-l border-dotted border-l-[#777]" />
              <div className="h-[18px] flex items-center pl-[1px] gap-[2px]"><Ic k="tTree" s={20} /><span>Teil1</span></div>
              {tree.map(([k, t, plus]) => (
                <div key={t} className="h-[18px] flex items-center relative pl-[21px]">
                  <div className="absolute left-[10px] top-[9px] w-[10px] border-t border-dotted border-t-[#777]" />
                  {plus && <div className="absolute left-[6px] top-[5px] w-[9px] h-[9px] border border-[#8a8880] bg-[#d8e8f8] flex items-center justify-center text-[9px] leading-none text-black font-bold">+</div>}
                  <Ic k={k} s={17} />
                  <span className="ml-[4px] whitespace-nowrap">{t}</span>
                </div>
              ))}
            </div>
          </div>
        </div>

        <div className="w-[4px] shrink-0 border-r border-r-white bg-[#d4d0c8]" />

        <div className="w-[1014px] shrink-0 flex flex-col">
          <div className="h-[701px] shrink-0 flex border-t-2 border-t-[#202020] border-l-2 border-l-[#202020]">
            <div className="relative w-[994px] h-[699px] overflow-hidden bg-gradient-to-b from-[#5db4fd] to-[#e6e8ea]"><Model /></div>
            <div className={"w-[17px] flex flex-col shrink-0 " + dither}>
              <div className="h-[8px] shrink-0 bg-[#d4d0c8] border-b border-b-[#303030] border-t border-t-white" />
              <SBtn dir="up" className="h-[17px] mt-[1px]" />
              <div className="flex-1" />
              <SBtn dir="down" className="h-[16px]" />
            </div>
            <div className="w-[1px]" />
          </div>
          <div className={"h-[18px] shrink-0 flex border-l-2 border-l-[#202020] " + dither}>
            <div className="w-[5px] bg-[#d4d0c8] border-r border-r-[#303030]" />
            <SBtn dir="left" className="w-[16px] ml-[1px]" />
            <div className="flex-1" />
            <SBtn dir="right" className="w-[16px]" />
            <div className="w-[18px] bg-[#d4d0c8]" />
          </div>
        </div>

        <div className="w-[25px] shrink-0 border-l border-l-white flex flex-col items-center pl-[1px]">
          <div className="mt-[27px] w-[22px] h-[24px] rounded-l-[3px] border border-[#c4c2bc] flex items-center justify-center"><Ic k="home" s={17} /></div>
          <div className="mt-[1px] w-[22px] h-[27px] rounded-l-[3px] bg-white border-r-2 border-r-[#f09020] flex items-center justify-center"><Ic k="books" s={18} /></div>
          <div className="mt-[1px] w-[22px] h-[25px] rounded-l-[3px] border border-[#c4c2bc] flex items-center justify-center"><Ic k="folder" s={18} /></div>
          <Collapse className="mt-[5px]" />
          <div className="flex-1 w-[5px] my-[8px] border-x border-x-[#a09e98] shadow-[1px_0_0_#fff]" />
          <Collapse className="mb-[58px]" />
        </div>
      </div>

      {/* status */}
      <div className="h-[20px] shrink-0 flex items-center pl-[37px] gap-[3px] text-[#808080] text-[11px] border-b border-b-[#8c8a84]">
        {[["SNAP", "w-[31px]"], ["ORTHO", "w-[41px]"], ["GRID", "w-[30px]"]].map(([t, w]) => (
          <div key={t} className={w + " h-[15px] flex items-center justify-center border border-t-[#a09e98] border-l-[#a09e98] border-r-white border-b-white leading-none"}>{t}</div>
        ))}
      </div>

      {/* annotation arrow */}
      <svg width="1277" height="879" viewBox="0 0 1277 879" className="absolute left-0 top-0 pointer-events-none">
        <defs><filter id="sh" x="-10%" y="-10%" width="120%" height="120%"><feGaussianBlur stdDeviation="2.5" /></filter></defs>
        <g opacity=".45" filter="url(#sh)" transform="translate(5 7)">
          <path d="M989 285L1240 62" stroke="#555" strokeWidth="3" /><path d="M1248 52L1230 58L1241 68Z" fill="#555" />
        </g>
        <path d="M989 285L1240 62" stroke="#f01010" strokeWidth="2.4" />
        <path d="M1248 52L1229 58L1241 69Z" fill="#f01010" />
      </svg>
    </div>
  );
}

function Collapse({ className = "" }) {
  return (
    <div className={"w-[15px] h-[15px] rounded-full bg-[#eef0fa] border border-[#b8c4e8] flex items-center justify-center shrink-0 " + className}>
      <svg viewBox="0 0 10 10" width="9" height="9"><path d="M5 1L1 5l4 4M9 1L5 5l4 4" fill="none" stroke="#1f4fb0" strokeWidth="1.6" /></svg>
    </div>
  );
}
